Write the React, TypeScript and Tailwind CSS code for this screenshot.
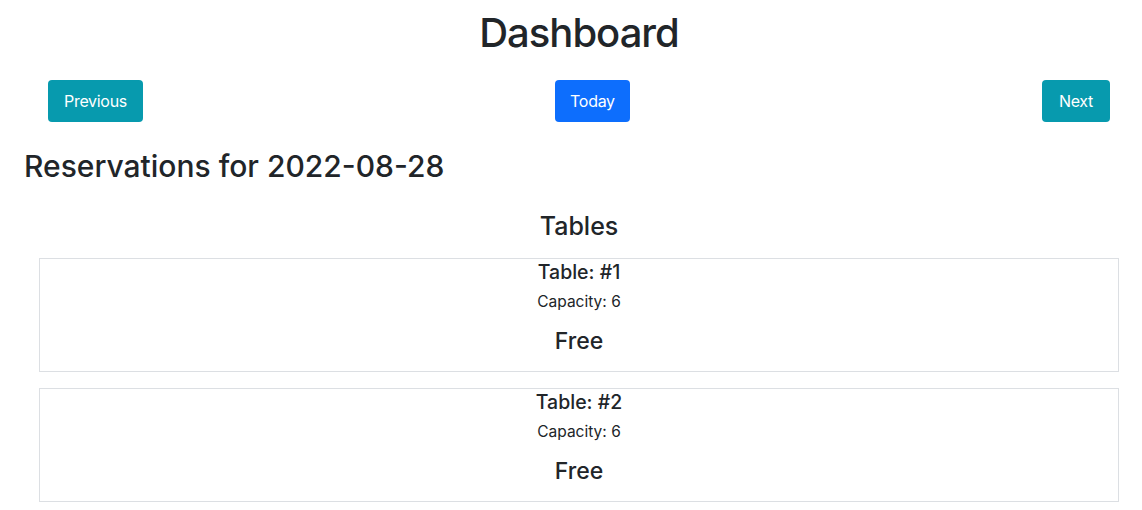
import React from "react";

const tables = [
  { id: 1, capacity: 6 },
  { id: 2, capacity: 6 },
];

function TableCard({ id, capacity }: { id: number; capacity: number }) {
  return (
    <div className="border border-[#dcdfe3] h-[114px] flex flex-col items-center">
      <h5 className="text-[19.5px] leading-[24px] mt-[1px] font-medium">Table: #{id}</h5>
      <p className="text-[15.5px] leading-[22px] mt-[7px]">Capacity: {capacity}</p>
      <h4 className="text-[23px] leading-[28px] mt-[14px] font-medium">Free</h4>
    </div>
  );
}

export default function App() {
  return (
    <div
      className="min-h-[510px] bg-white text-[#212529] pl-[16px]"
      style={{ fontFamily: "Inter, 'Noto Sans', sans-serif" }}
    >
      <h1 className="text-center text-[40px] leading-[48px] pt-[9px] font-medium tracking-[-1px]">
        Dashboard
      </h1>
      <div className="flex items-center justify-between pl-[32px] pr-[32px] mt-[23px]">
        <button className="h-[42px] px-[16px] rounded-[4px] bg-[#079aae] text-white text-[16px] tracking-[-0.3px]">
          Previous
        </button>
        <button className="h-[42px] px-[15px] rounded-[4px] bg-[#0d6efd] text-white text-[16px] tracking-[-0.3px]">
          Today
        </button>
        <button className="h-[42px] px-[17px] rounded-[4px] bg-[#079aae] text-white text-[16px] tracking-[-0.3px]">
          Next
        </button>
      </div>
      <h2 className="pl-[8px] mt-[26px] text-[30px] leading-[36px] font-medium">
        Reservations for 2022-08-28
      </h2>
      <h3 className="text-center mt-[27px] text-[25px] leading-[30px] font-medium">Tables</h3>
      <div className="pl-[23px] pr-[23px] mt-[17px] flex flex-col gap-[16px]">
        {tables.map((t) => (
          <TableCard key={t.id} id={t.id} capacity={t.capacity} />
        ))}
      </div>
    </div>
  );
}
